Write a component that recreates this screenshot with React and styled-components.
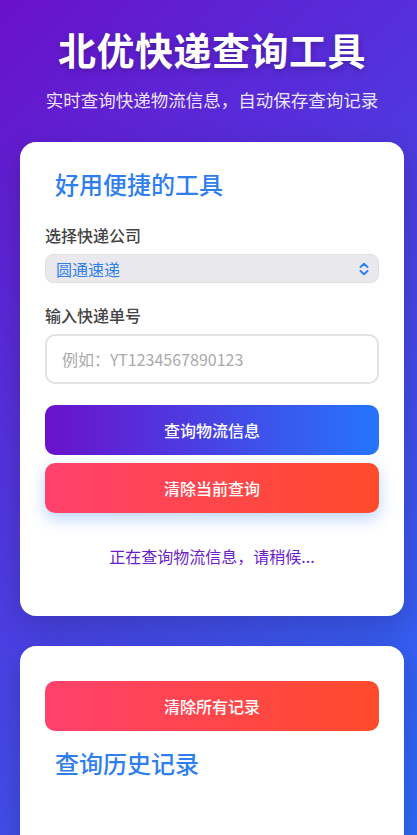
import styled, { createGlobalStyle } from 'styled-components';

const GlobalStyle = createGlobalStyle`
  html, body {
    margin: 0;
    padding: 0;
  }
  body {
    font-family: "Noto Sans CJK SC", "Noto Sans", sans-serif;
    background: linear-gradient(135deg, #6a11cb 0%, #2575fc 100%);
    min-height: 100vh;
  }
  * { box-sizing: border-box; }
`;

const Page = styled.div`
  display: flex;
  flex-direction: column;
  padding: 20px 13px 0 20px;
`;

const Header = styled.header`
  display: flex;
  flex-direction: column;
  align-items: center;
  color: #fff;
  margin-bottom: 30px;
`;

const Title = styled.h1`
  margin: 4px 0 0;
  font-size: 38px;
  line-height: 50px;
  font-weight: 700;
  letter-spacing: 0.5px;
  text-shadow: 0 2px 6px rgba(0, 0, 0, 0.25);
`;

const Subtitle = styled.p`
  margin: 14px 0 0;
  font-size: 17.5px;
  line-height: 24px;
  font-weight: 400;
  opacity: 0.88;
`;

const Card = styled.section`
  background: #fff;
  border-radius: 16px;
  box-shadow: 0 10px 30px rgba(0, 0, 0, 0.18);
  padding: ${(p) => p.$pad || '25px'};
  margin-bottom: 30px;
  display: flex;
  flex-direction: column;
  min-height: ${(p) => p.$minH || 'auto'};
`;

const CardTitle = styled.h2`
  margin: ${(p) => p.$m || '0'};
  padding-left: 10px;
  font-size: 24px;
  line-height: 32px;
  font-weight: 500;
  color: #2f80ed;
`;

const Field = styled.div`
  display: flex;
  flex-direction: column;
  margin-top: ${(p) => p.$mt || '0'};
`;

const Label = styled.label`
  font-size: 16px;
  line-height: 22px;
  font-weight: 500;
  color: #444;
  margin-bottom: 8px;
`;

const Select = styled.div`
  height: 29px;
  border-radius: 8px;
  background: #e9e9ed;
  border: 1px solid #e0e0e4;
  display: flex;
  align-items: center;
  justify-content: space-between;
  padding: 0 8px 0 10px;
  color: #2f80ed;
  font-size: 16px;
`;

const Input = styled.input`
  height: 50px;
  border: 2px solid #e3e3e3;
  border-radius: 10px;
  padding: 0 15px;
  font-size: 16px;
  font-family: inherit;
  outline: none;
  &::placeholder {
    color: #aaa;
  }
`;

const Button = styled.button`
  height: 50px;
  width: 100%;
  border: none;
  border-radius: 10px;
  color: #fff;
  font-family: inherit;
  font-size: 16px;
  font-weight: 500;
  margin-top: ${(p) => p.$mt || '0'};
  background: ${(p) =>
    p.$danger
      ? 'linear-gradient(90deg, #ff416c 0%, #ff4b2b 100%)'
      : 'linear-gradient(90deg, #6a11cb 0%, #2575fc 100%)'};
  box-shadow: ${(p) => (p.$raised ? '0 6px 16px rgba(37, 117, 252, 0.3)' : 'none')};
`;

const Status = styled.p`
  margin: 32px 0 24px;
  text-align: center;
  font-size: 16px;
  line-height: 22px;
  color: #6a1fcb;
`;

const Chevron = () => (
  <svg width="12" height="14" viewBox="0 0 12 14" fill="none" stroke="#2f80ed" strokeWidth="2" strokeLinecap="round" strokeLinejoin="round">
    <path d="M2.5 5 L6 1.8 L9.5 5" />
    <path d="M2.5 9 L6 12.2 L9.5 9" />
  </svg>
);

export default function App() {
  return (
    <>
      <GlobalStyle />
      <Page>
        <Header>
          <Title>北优快递查询工具</Title>
          <Subtitle>实时查询快递物流信息，自动保存查询记录</Subtitle>
        </Header>

        <Card>
          <CardTitle $m="1px 0 0">好用便捷的工具</CardTitle>
          <Field $mt="24px">
            <Label>选择快递公司</Label>
            <Select>
              <span>圆通速递</span>
              <Chevron />
            </Select>
          </Field>
          <Field $mt="21px">
            <Label>输入快递单号</Label>
            <Input placeholder="例如：YT1234567890123" />
          </Field>
          <Button $mt="21px">查询物流信息</Button>
          <Button $mt="8px" $danger $raised>清除当前查询</Button>
          <Status>正在查询物流信息，请稍候...</Status>
        </Card>

        <Card $pad="35px 25px 25px" $minH="300px">
          <Button $danger>清除所有记录</Button>
          <CardTitle $m="16px 0 0">查询历史记录</CardTitle>
        </Card>
      </Page>
    </>
  );
}
